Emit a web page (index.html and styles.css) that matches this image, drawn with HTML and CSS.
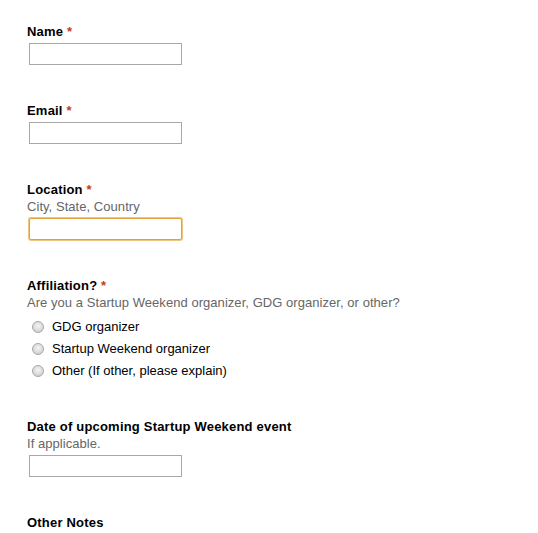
FILE: index.html
```html
<!DOCTYPE html>
<html>
<head>
<meta charset="utf-8">
<link rel="stylesheet" href="styles.css">
</head>
<body>
<form class="form">
  <div class="q">
    <div class="label">Name <span class="req">*</span></div>
    <div class="box"></div>
  </div>
  <div class="q">
    <div class="label">Email <span class="req">*</span></div>
    <div class="box"></div>
  </div>
  <div class="q">
    <div class="label">Location <span class="req">*</span></div>
    <div class="help">City, State, Country</div>
    <div class="box focus"></div>
  </div>
  <div class="q">
    <div class="label">Affiliation? <span class="req">*</span></div>
    <div class="help">Are you a Startup Weekend organizer, GDG organizer, or other?</div>
    <div class="options">
      <div class="opt"><span class="radio"></span><span>GDG organizer</span></div>
      <div class="opt"><span class="radio"></span><span>Startup Weekend organizer</span></div>
      <div class="opt"><span class="radio"></span><span>Other (If other, please explain)</span></div>
    </div>
  </div>
  <div class="q">
    <div class="label">Date of upcoming Startup Weekend event</div>
    <div class="help">If applicable.</div>
    <div class="box"></div>
  </div>
  <div class="q">
    <div class="label">Other Notes</div>
  </div>
</form>
</body>
</html>
```
FILE: styles.css
```css
html, body {
  margin: 0;
  padding: 0;
  background: #fff;
}
body {
  font-family: "Liberation Sans", Arial, sans-serif;
  font-size: 13px;
  color: #000;
}
.form {
  padding: 24px 0 0 27px;
}
.q {
  margin-bottom: 38px;
}
.label {
  font-weight: bold;
  line-height: 16px;
  color: #000;
  letter-spacing: 0.2px;
}
.req {
  color: #c43b1d;
  font-weight: bold;
}
.help {
  color: #666;
  line-height: 17px;
  letter-spacing: 0.05px;
}
.box {
  margin: 3px 0 0 2px;
  width: 151px;
  height: 20px;
  border: 1px solid #a9a9a9;
  background: #fff;
}
.box.focus {
  border: 1px solid #e1a33f;
  border-radius: 2px;
  box-shadow: 0 0 0 1px #efc77a;
}
.options {
  margin-top: 4px;
}
.opt {
  display: flex;
  align-items: center;
  height: 22px;
  padding-left: 5px;
  gap: 8px;
  color: #000;
}
.radio {
  width: 12px;
  height: 12px;
  border-radius: 50%;
  box-sizing: border-box;
  border: 1px solid #a8a8a8;
  background: radial-gradient(circle at 50% 40%, #f4f4f4 0%, #dcdcdc 55%, #c4c4c4 100%);
  margin-top: 1px;
}
```
